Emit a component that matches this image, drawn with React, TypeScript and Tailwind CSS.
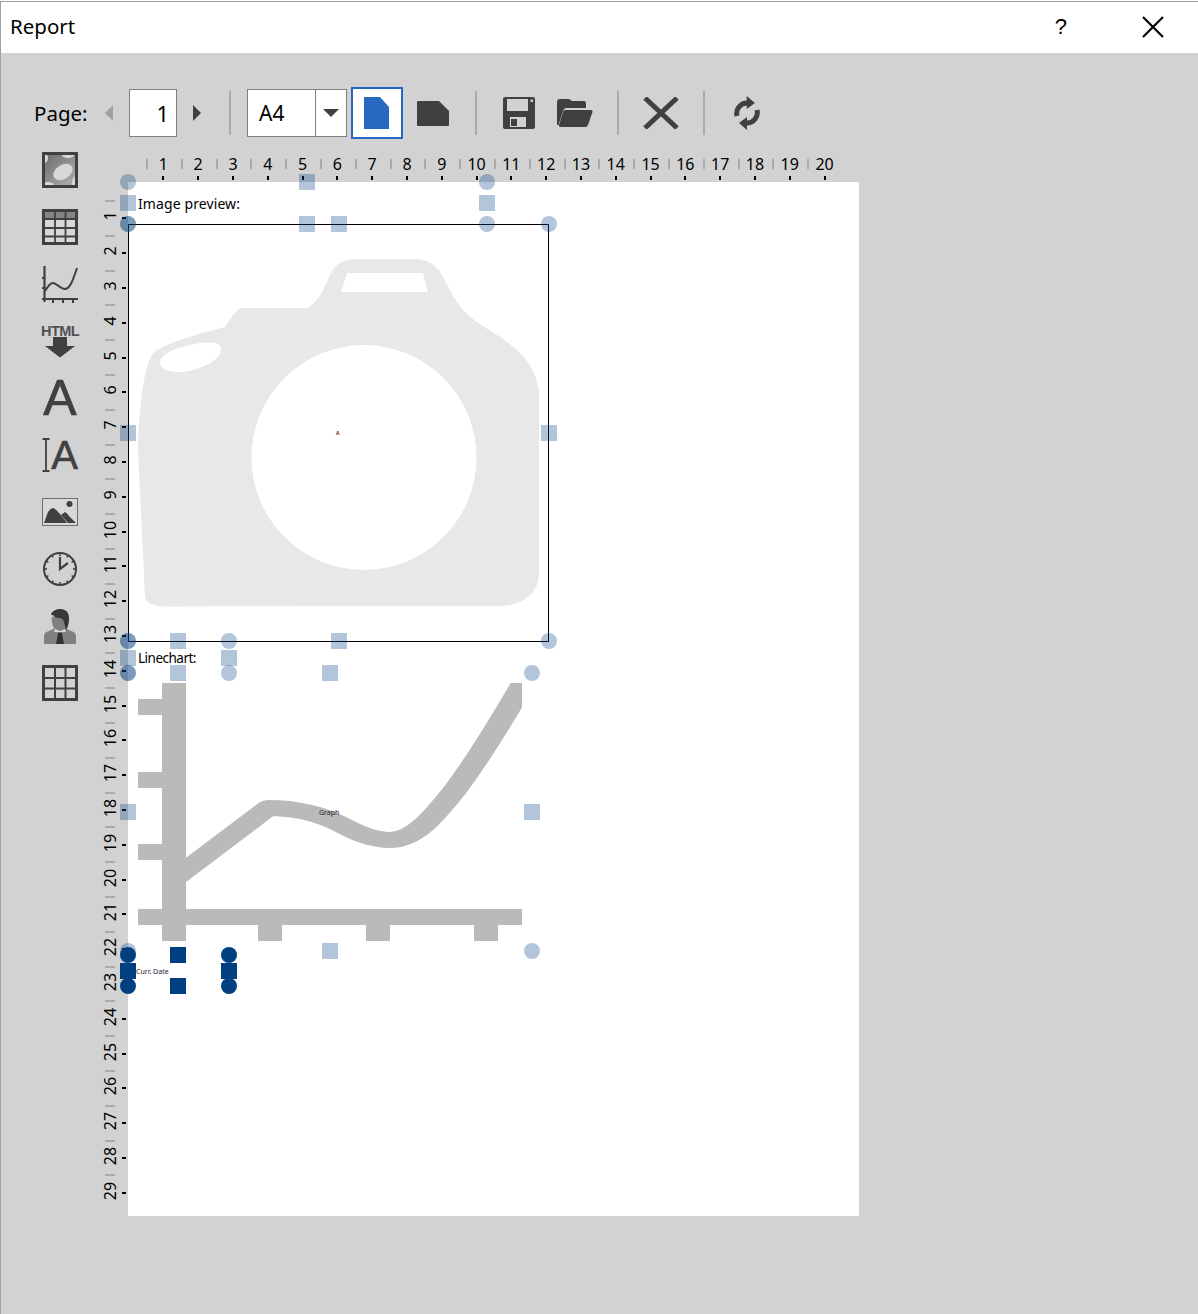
import { Fragment } from 'react'

type Handle = { x: number; y: number; round?: boolean; dark?: boolean }

const RULER_X = Array.from({ length: 20 }, (_, i) => i + 1)
const RULER_Y = Array.from({ length: 29 }, (_, i) => i + 1)

// handle centres, in screen coordinates of the reference
const HANDLES: Handle[] = [
  // image preview label
  { x: 128, y: 182, round: true }, { x: 128, y: 203 }, { x: 128, y: 224, round: true },
  { x: 307, y: 182 }, { x: 307, y: 224 },
  { x: 487, y: 182, round: true }, { x: 487, y: 203 }, { x: 487, y: 224, round: true },
  // image
  { x: 128, y: 224, round: true }, { x: 339, y: 224 }, { x: 549, y: 224, round: true },
  { x: 128, y: 433 }, { x: 549, y: 433 },
  { x: 128, y: 641, round: true }, { x: 339, y: 641 }, { x: 549, y: 641, round: true },
  // linechart label
  { x: 128, y: 641, round: true }, { x: 178, y: 641 }, { x: 229, y: 641, round: true },
  { x: 128, y: 658 }, { x: 229, y: 658 },
  { x: 128, y: 673, round: true }, { x: 178, y: 673 }, { x: 229, y: 673, round: true },
  // chart
  { x: 128, y: 673, round: true }, { x: 330, y: 673 }, { x: 532, y: 673, round: true },
  { x: 128, y: 812 }, { x: 532, y: 812 },
  { x: 128, y: 951, round: true }, { x: 330, y: 951 }, { x: 532, y: 951, round: true },
  // selected date field
  { x: 128, y: 955, round: true, dark: true }, { x: 178, y: 955, dark: true }, { x: 229, y: 955, round: true, dark: true },
  { x: 128, y: 971, dark: true }, { x: 229, y: 971, dark: true },
  { x: 128, y: 986, round: true, dark: true }, { x: 178, y: 986, dark: true }, { x: 229, y: 986, round: true, dark: true },
]

function Separator({ className }: { className: string }) {
  return <div className={`h-[44px] w-[2px] bg-[#aaaaaa] ${className}`} />
}

function ImageFieldIcon() {
  return (
    <svg width="36" height="36" viewBox="0 0 36 36">
      <defs>
        <linearGradient id="imgfield" x1="0" y1="0" x2="1" y2="1">
          <stop offset="0" stopColor="#6a6a6a" />
          <stop offset="1" stopColor="#b4b4b4" />
        </linearGradient>
        <clipPath id="imgclip"><rect x="3" y="3" width="30" height="30" /></clipPath>
      </defs>
      <rect x="1.5" y="1.5" width="33" height="33" fill="url(#imgfield)" stroke="#404040" strokeWidth="3" />
      <g fill="#d8d8d8" clipPath="url(#imgclip)">
        <ellipse cx="21" cy="20" rx="10.5" ry="7" transform="rotate(-32 21 20)" />
        <ellipse cx="3" cy="6" rx="3" ry="5" />
        <ellipse cx="26" cy="3" rx="6" ry="3" />
        <ellipse cx="6" cy="33" rx="6" ry="3" />
        <ellipse cx="33" cy="31" rx="3" ry="6" />
      </g>
    </svg>
  )
}

function TableIcon() {
  return (
    <svg width="36" height="36" viewBox="0 0 36 36">
      <rect x="1.5" y="1.5" width="33" height="33" fill="#d8d8d8" stroke="#404040" strokeWidth="3" />
      <rect x="3" y="3" width="30" height="7" fill="#858585" />
      <path d="M13 3v30M23.5 3v30M3 10h30M3 19h30M3 27.5h30" stroke="#404040" strokeWidth="1.8" fill="none" />
    </svg>
  )
}

function ChartIcon() {
  return (
    <svg width="36" height="37" viewBox="0 0 36 37" fill="none" stroke="#404040">
      <path d="M2.5 0v36M0 33h36" strokeWidth="2.2" />
      <path d="M0 12h3M0 22h3M11 33v4M21 33v4M31 33v4" strokeWidth="2" />
      <path d="M3 25C6 20 8 17 11 17C15 17 18 23 23 23C28 23 31 14 35 2" strokeWidth="2" />
    </svg>
  )
}

function HtmlIcon() {
  return (
    <div className="flex h-[34px] w-[38px] flex-col items-center">
      <span className="h-[13px] font-['Liberation_Sans',sans-serif] text-[14.5px] leading-[15px] font-bold tracking-[-0.6px] text-[#505050]">HTML</span>
      <svg width="30" height="21" viewBox="0 0 30 21" fill="#404040">
        <path d="M8 0h14v9h8L15 20.5L0 9h8z" />
      </svg>
    </div>
  )
}

function LabelIcon() {
  return (
    <div className="flex h-[36px] w-[36px] items-center justify-center font-['Liberation_Sans',sans-serif] text-[50px] leading-[36px] text-[#404040] [-webkit-text-stroke:0.7px_#404040]">A</div>
  )
}

function TextFieldIcon() {
  return (
    <div className="flex h-[34px] w-[36px] items-center justify-between">
      <svg width="8" height="34" viewBox="0 0 8 34" fill="none" stroke="#404040" strokeWidth="1.8">
        <path d="M0.5 1h7M4 1v32M0.5 33h7" />
      </svg>
      <span className="font-['Liberation_Sans',sans-serif] text-[40px] leading-[34px] text-[#404040] [-webkit-text-stroke:0.6px_#404040]">A</span>
    </div>
  )
}

function PictureIcon() {
  return (
    <svg width="36" height="28" viewBox="0 0 36 28">
      <rect x="0.5" y="0.5" width="35" height="27" fill="#d8d8d8" stroke="#6e6e6e" />
      <circle cx="27.5" cy="6" r="3" fill="#404040" />
      <path d="M2 25L6 14Q9 10 11 10Q14 11 17 15Q20 18 25 25z" fill="#404040" />
      <path d="M19 17L23 14Q25 15 27 18L34 25H26z" fill="#404040" />
    </svg>
  )
}

function ClockIcon() {
  return (
    <svg width="36" height="36" viewBox="0 0 36 36" fill="none" stroke="#404040">
      <circle cx="18" cy="18" r="16" strokeWidth="2" />
      <path d="M18 6v12L26 12" strokeWidth="2.2" />
      <path d="M18 2v3M18 31v3M2 18h3M31 18h3M10 4.2l1.3 2.2M26 4.2l-1.3 2.2M4.2 10l2.2 1.3M31.8 10l-2.2 1.3M4.2 26l2.2-1.3M31.8 26l-2.2-1.3M10 31.8l1.3-2.2M26 31.8l-1.3-2.2" strokeWidth="1.5" />
    </svg>
  )
}

function PersonIcon() {
  return (
    <svg width="32" height="36" viewBox="0 0 32 36">
      <path d="M0 36V28Q0 24 5 23L11 20H21L27 23Q32 24 32 28V36z" fill="#808080" />
      <path d="M7 6Q10 1 17 1Q25 2 25 10Q25 17 22 22Q19 24 15 24Q9 22 8 14z" fill="#808080" />
      <path d="M7 6Q10 1 17 1Q25 2 25 10Q25 17 22 22L20 14Q19 10 15 10Q12 10 10 8Q8 8 7 6z" fill="#383838" />
      <rect x="7" y="7" width="2.5" height="2.5" fill="#c8c8c8" />
      <path d="M13.5 23H18.5L18 26L20 36H12L14 26z" fill="#303030" />
      <path d="M11 21L16 23L21 21L22 24L16 24.5L10 24z" fill="#d8d8d8" />
    </svg>
  )
}

function GridIcon() {
  return (
    <svg width="36" height="36" viewBox="0 0 36 36" fill="none" stroke="#404040">
      <rect x="1.5" y="1.5" width="33" height="33" strokeWidth="3" />
      <path d="M13 3v30M23.5 3v30M3 13h30M3 23.5h30" strokeWidth="2" />
    </svg>
  )
}

const SIDEBAR = [ImageFieldIcon, TableIcon, ChartIcon, HtmlIcon, LabelIcon, TextFieldIcon, PictureIcon, ClockIcon, PersonIcon, GridIcon]

export default function App() {
  return (
    <div className="h-[1314px] w-[1198px] overflow-hidden bg-white pt-px font-['Noto_Sans',sans-serif]">
      <div className="flex h-[1313px] flex-col border-t border-l border-[#a0a0a0] bg-[#d2d2d2] text-black">
        {/* Title bar */}
        <div className="flex h-[51px] shrink-0 items-center bg-white pb-[2px] pl-[9px]">
          <span className="text-[20.5px] leading-none">Report</span>
          <span className="ml-auto font-['Liberation_Sans',sans-serif] text-[22px] leading-none">?</span>
          <svg className="mr-[33px] ml-[74px]" width="24" height="24" viewBox="0 0 24 24" fill="none" stroke="#000" strokeWidth="2.2">
            <path d="M2 2L22 22M22 2L2 22" />
          </svg>
        </div>

        {/* Toolbar */}
        <div className="flex h-[88px] shrink-0 items-center pt-[32px] pl-[33px]">
          <span className="w-[71px] pt-px text-[20.5px] leading-none">Page:</span>
          <svg width="8" height="16" viewBox="0 0 8 16" fill="#a0a0a0"><path d="M8 0V16L0 8z" /></svg>
          <div className="ml-4 flex h-[48px] w-[48px] items-center justify-end border border-[#808080] bg-white pt-px pr-[7px] text-[22px]">1</div>
          <svg className="ml-4" width="8" height="16" viewBox="0 0 8 16" fill="#404040"><path d="M0 0V16L8 8z" /></svg>
          <Separator className="ml-[28px]" />
          <div className="ml-4 flex h-[48px] w-[100px] border border-[#808080] bg-white">
            <div className="flex w-[68px] items-center border-r border-[#808080] pt-px pl-[11px] text-[21px]">A4</div>
            <div className="flex flex-1 items-center justify-center">
              <svg width="16" height="8" viewBox="0 0 16 8" fill="#404040"><path d="M0 0H16L8 8z" /></svg>
            </div>
          </div>
          <div className="ml-1 flex h-[52px] w-[52px] items-center justify-center border-2 border-[#2468c0] bg-white pr-px">
            <svg width="25" height="32" viewBox="0 0 25 32" fill="#2868c0"><path d="M0 0H16L25 10V32H0z" /></svg>
          </div>
          <svg className="ml-[14px]" width="32" height="25" viewBox="0 0 32 25" fill="#404040"><path d="M1 0H22L32 10V24Q32 25 31 25H1Q0 25 0 24V1Q0 0 1 0z" /></svg>
          <Separator className="ml-[26px]" />
          <svg className="ml-[26px]" width="32" height="32" viewBox="0 0 32 32">
            <path d="M2 0H30Q32 0 32 2V30Q32 32 30 32H2Q0 32 0 30V2Q0 0 2 0z" fill="#404040" />
            <rect x="4" y="2" width="21" height="12" fill="#d2d2d2" />
            <rect x="27.5" y="2.5" width="2.5" height="2.5" fill="#d2d2d2" />
            <rect x="7" y="20" width="16" height="10" fill="#d2d2d2" />
            <rect x="8" y="22" width="6" height="7" fill="#404040" />
          </svg>
          <svg className="ml-[22px]" width="36" height="28" viewBox="0 0 36 28">
            <path d="M0 3Q0 0 3 0H12L15 2H27Q29 2 29 5V9H10Q7 9 6 12L1.5 26H0z" fill="#404040" />
            <path d="M8 11H34Q36 11 35.5 13L31 26Q30.5 28 28 28H3Q1.5 28 2 26L6 13Q6.5 11 8 11z" fill="#404040" />
          </svg>
          <Separator className="ml-[24px]" />
          <svg className="ml-[24px]" width="36" height="32" viewBox="0 0 36 32" fill="none" stroke="#404040" strokeWidth="5">
            <path d="M2 1L34 31M34 1L2 31" />
          </svg>
          <Separator className="ml-[24px]" />
          <svg className="ml-[29px]" width="26" height="34" viewBox="0 0 26 34">
            <path d="M3 20A10.5 10.5 0 0 1 13 7M23 14A10.5 10.5 0 0 1 13 27" fill="none" stroke="#404040" strokeWidth="5" />
            <path d="M12.7 0L21 7L12.7 13zM13 34L5 27L13 21z" fill="#404040" />
          </svg>
        </div>

        {/* Main area */}
        <div className="flex flex-1 pl-[41px]">
          <div className="flex w-[36px] shrink-0 flex-col pt-[0.5px]">
            {SIDEBAR.map((Icon, i) => (
              <div key={i} className="flex h-[57px] items-center justify-center">
                <Icon />
              </div>
            ))}
          </div>

          <div className="ml-[22px] flex flex-col pt-[16px]">
            {/* Horizontal ruler */}
            <div className="ml-[46px] flex h-[25px]">
              {RULER_X.map(n => (
                <div key={n} className="flex h-[25px] w-[34.8px] shrink-0 flex-col">
                  <div className="flex h-[19px]">
                    <div className="mt-[2px] h-[10px] w-[2px] shrink-0 bg-[#aaaaaa]" />
                    <span className="-mt-px flex-1 pr-[2px] text-center text-[16px] leading-[16px]">{n}</span>
                  </div>
                  <div className="mx-auto h-[4px] w-[2px] bg-black" />
                </div>
              ))}
            </div>

            <div className="flex">
              {/* Vertical ruler */}
              <div className="flex w-[28px] shrink-0 flex-col pt-[18px]">
                {RULER_Y.map(n => (
                  <div key={n} className="flex h-[34.8px] shrink-0 flex-col">
                    <div className="ml-[5px] h-[2px] w-[10px] bg-[#aaaaaa]" />
                    <div className="flex flex-1 items-center">
                      <span className="flex h-[20px] w-[20px] -translate-y-px -rotate-90 items-center justify-center pl-[2px] text-[16px] leading-none whitespace-nowrap">{n}</span>
                      <div className="ml-[2px] h-[2px] w-[4px] bg-black" />
                    </div>
                  </div>
                ))}
              </div>

              {/* Page */}
              <div className="relative h-[1034px] w-[731px] shrink-0 bg-white">
                <svg className="absolute inset-0" width="731" height="1034" viewBox="128 182 731 1034">
                  <defs>
                    <clipPath id="plot"><rect x="186" y="683" width="336" height="240" /></clipPath>
                  </defs>
                  <path
                    fillRule="evenodd"
                    fill="#e8e8e8"
                    d="M145 597C146 603 152 606 165 606.5L500 606C525 605 539 592 539 573L539 390C535 365 520 350 497 335C485 327 472 320 463 310C455 300 450 290 443 277C437 265 428 259 413 259L357 259C343 259 335 264 330 275C325 287 320 300 308 308L242 308C235 310 230 320 225 327C205 332 175 340 157 350C150 355 147 365 145 375C140 400 138 430 138 450zM347 273L423 273L428 292L341 292zM251.5 457.5A112.5 112.5 0 1 0 476.5 457.5A112.5 112.5 0 1 0 251.5 457.5zM160.5 360.5C158 367 166 373 182 372C200 370 222 360 221 349C220 341 208 342 195 344C178 347 163 353 160.5 360.5z"
                  />
                  <g fill="#bababa">
                    <rect x="162" y="683" width="24" height="258" />
                    <rect x="138" y="909" width="384" height="16" />
                    <rect x="138" y="699" width="24" height="16" />
                    <rect x="138" y="772" width="24" height="16" />
                    <rect x="138" y="844" width="24" height="16" />
                    <rect x="258" y="925" width="24" height="16" />
                    <rect x="366" y="925" width="24" height="16" />
                    <rect x="474" y="925" width="24" height="16" />
                  </g>
                  {/* chart is stretched 1.5x horizontally, so the pen is too */}
                  <g clipPath="url(#plot)">
                    <path
                      transform="scale(1.5 1)"
                      d="M113.33 882L178.67 808C196.67 808 213.33 814 226.67 824C240 835 250 840 260 840C276.67 840 290 815 303.33 790C320 757 336.67 715 353.33 672"
                      fill="none"
                      stroke="#bababa"
                      strokeWidth="16"
                      strokeLinejoin="round"
                    />
                  </g>
                </svg>

                <div className="absolute top-[42px] left-0 h-[418px] w-[421px] border border-black" />

                <span className="absolute top-[13px] left-[10px] text-[14px] leading-[18px] tracking-[0.1px]">Image preview:</span>
                <span className="absolute top-[467px] left-[10px] text-[13.5px] leading-[18px] tracking-[-0.5px]">Linechart:</span>
                <span className="absolute top-[248px] left-[208px] text-[5px] leading-[6px] font-bold text-[#703000]">A</span>
                <span className="absolute top-[627px] left-[191px] text-[7px] leading-[8px] text-[#202020]">Graph</span>
                <span className="absolute top-[786px] left-[8px] text-[7px] leading-[8px] text-[#202030]">Curr. Date</span>

                {HANDLES.map((h, i) => (
                  <Fragment key={i}>
                    <div
                      className={`absolute h-[16px] w-[16px] ${h.round ? 'rounded-full' : ''} ${h.dark ? 'bg-[#004080]' : 'bg-[#004080]/30'}`}
                      style={{ left: h.x - 128 - 8, top: h.y - 182 - 8 }}
                    />
                  </Fragment>
                ))}
              </div>
            </div>
          </div>
        </div>
      </div>
    </div>
  )
}
